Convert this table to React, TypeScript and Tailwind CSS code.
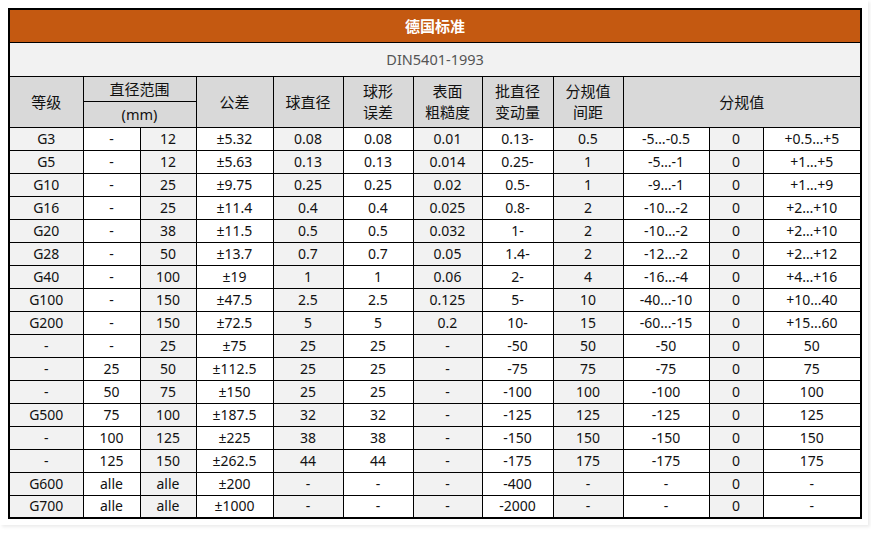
import React from "react";

const rows: string[][] = [
  ["G3", "-", "12", "±5.32", "0.08", "0.08", "0.01", "0.13-", "0.5", "-5…-0.5", "0", "+0.5…+5"],
  ["G5", "-", "12", "±5.63", "0.13", "0.13", "0.014", "0.25-", "1", "-5…-1", "0", "+1…+5"],
  ["G10", "-", "25", "±9.75", "0.25", "0.25", "0.02", "0.5-", "1", "-9…-1", "0", "+1…+9"],
  ["G16", "-", "25", "±11.4", "0.4", "0.4", "0.025", "0.8-", "2", "-10…-2", "0", "+2…+10"],
  ["G20", "-", "38", "±11.5", "0.5", "0.5", "0.032", "1-", "2", "-10…-2", "0", "+2…+10"],
  ["G28", "-", "50", "±13.7", "0.7", "0.7", "0.05", "1.4-", "2", "-12…-2", "0", "+2…+12"],
  ["G40", "-", "100", "±19", "1", "1", "0.06", "2-", "4", "-16…-4", "0", "+4…+16"],
  ["G100", "-", "150", "±47.5", "2.5", "2.5", "0.125", "5-", "10", "-40...-10", "0", "+10...40"],
  ["G200", "-", "150", "±72.5", "5", "5", "0.2", "10-", "15", "-60...-15", "0", "+15...60"],
  ["-", "-", "25", "±75", "25", "25", "-", "-50", "50", "-50", "0", "50"],
  ["-", "25", "50", "±112.5", "25", "25", "-", "-75", "75", "-75", "0", "75"],
  ["-", "50", "75", "±150", "25", "25", "-", "-100", "100", "-100", "0", "100"],
  ["G500", "75", "100", "±187.5", "32", "32", "-", "-125", "125", "-125", "0", "125"],
  ["-", "100", "125", "±225", "38", "38", "-", "-150", "150", "-150", "0", "150"],
  ["-", "125", "150", "±262.5", "44", "44", "-", "-175", "175", "-175", "0", "175"],
  ["G600", "alle", "alle", "±200", "-", "-", "-", "-400", "-", "-", "0", "-"],
  ["G700", "alle", "alle", "±1000", "-", "-", "-", "-2000", "-", "-", "0", "-"],
];

const widths = [74, 57, 56, 77, 70, 70, 69, 71, 70, 86, 54, 98];

export default function App() {
  return (
    <div
      className="bg-white w-[871px] h-[533px]"
      style={{ fontFamily: '"Noto Sans", "Noto Sans CJK SC", sans-serif' }}
    >
      <div className="w-[868px] pt-[8px] pl-[8px] pb-[6px] pr-[4px] shadow-[2px_2px_3px_rgba(0,0,0,0.08)]">
        <table className="border-collapse table-fixed w-[854px] border-2 border-black text-[14px] leading-[20px] text-[#111]">
          <colgroup>
            {widths.map((w, i) => (
              <col key={i} style={{ width: w }} />
            ))}
          </colgroup>
          <thead>
            <tr>
              <th
                colSpan={12}
                className="h-[33px] bg-[#c45911] text-white text-[15px] font-bold text-center border border-black"
              >
                德国标准
              </th>
            </tr>
            <tr>
              <td
                colSpan={12}
                className="h-[34px] bg-[#f2f2f2] text-[#555] text-[14.5px] text-center border border-black"
              >
                DIN5401-1993
              </td>
            </tr>
            <tr className="bg-[#d9d9d9] text-[15px]">
              <td rowSpan={2} className="border border-black text-center">等级</td>
              <td colSpan={2} className="h-[25px] border border-black text-center">直径范围</td>
              <td rowSpan={2} className="border border-black text-center">公差</td>
              <td rowSpan={2} className="border border-black text-center">球直径</td>
              <td rowSpan={2} className="border border-black text-center leading-[21px]">球形<br />误差</td>
              <td rowSpan={2} className="border border-black text-center leading-[21px]">表面<br />粗糙度</td>
              <td rowSpan={2} className="border border-black text-center leading-[21px]">批直径<br />变动量</td>
              <td rowSpan={2} className="border border-black text-center leading-[21px]">分规值<br />间距</td>
              <td rowSpan={2} colSpan={3} className="border border-black text-center">分规值</td>
            </tr>
            <tr className="bg-[#d9d9d9] text-[14.5px]">
              <td colSpan={2} className="h-[26px] border border-black text-center">(mm)</td>
            </tr>
          </thead>
          <tbody>
            {rows.map((r, ri) => (
              <tr key={ri} className="h-[23px]">
                {r.map((c, ci) => (
                  <td
                    key={ci}
                    className={
                      "border border-black text-center p-0 " +
                      (ci % 2 === 0 ? "bg-[#f2f2f2]" : "bg-white")
                    }
                  >
                    {c}
                  </td>
                ))}
              </tr>
            ))}
          </tbody>
        </table>
      </div>
    </div>
  );
}
